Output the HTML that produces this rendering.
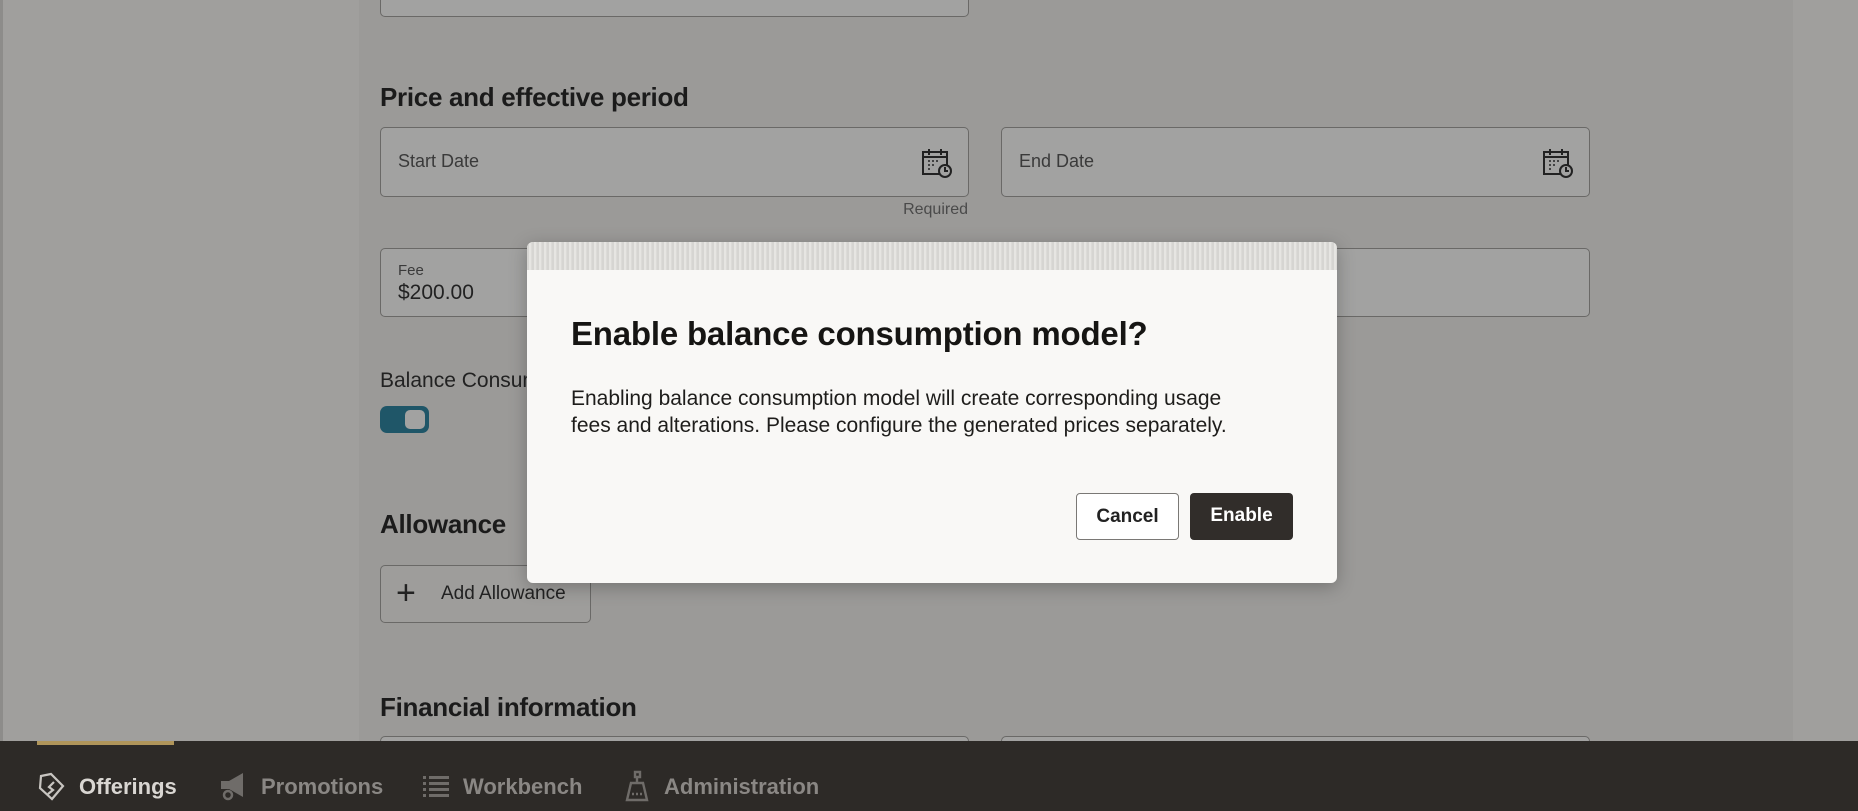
<!DOCTYPE html>
<html><head><meta charset="utf-8"><style>
*{box-sizing:border-box;margin:0;padding:0}
body{width:1858px;height:811px;overflow:hidden;background:#a09f9d;font-family:"Liberation Sans",sans-serif;position:relative;color:#1e1e1e}
.abs{position:absolute}
.col{left:359px;top:0;width:1434px;height:741px;background:#9b9a98}
.edge{left:0;top:0;width:3px;height:741px;background:#8d8c8a}
.field{position:absolute;border:1px solid #6a6967;border-radius:5px;background:#a2a2a1}
.lbl{position:absolute;font-size:18px;color:#3a3a3a}
h2{position:absolute;font-size:26px;font-weight:bold;color:#1b1b1b;letter-spacing:-0.3px}
.bar{left:0;top:741px;width:1858px;height:70px;background:#2d2a27}
.nav{position:absolute;top:774px;font-size:22px;font-weight:600;color:#8a8784}
.dlg{left:527px;top:242px;width:810px;height:341px;background:#f9f8f6;border-radius:6px;overflow:hidden;box-shadow:0 4px 18px rgba(0,0,0,.25)}
.tex{left:0;top:0;width:810px;height:28px;background:repeating-linear-gradient(90deg,#d6d5d2 0 2px,#e6e5e2 2px 4px,#dcdbd8 4px 5px)}
.btn{position:absolute;top:251px;height:47px;border-radius:4px;font-size:19px;font-weight:bold;text-align:center;line-height:45px}
</style></head><body>
<div class="abs edge"></div>
<div class="abs col"></div>
<div class="field" style="left:380px;top:-20px;width:589px;height:37px"></div>
<h2 style="left:380px;top:82px">Price and effective period</h2>
<div class="field" style="left:380px;top:127px;width:589px;height:70px"><span class="lbl" style="left:17px;top:23px">Start Date</span>
<svg class="abs" style="left:540px;top:19px" width="32" height="32" viewBox="0 0 32 32" fill="none" stroke="#222" stroke-width="2"><rect x="2" y="5" width="24" height="22"/><path d="M2 10h24M8 2v6M20 2v6"/><circle cx="24" cy="24" r="6" fill="#a2a2a1"/><path d="M24 20v4h3"/><path d="M7 14h2M11 14h2M15 14h2M7 18h2M11 18h2M7 22h2" stroke-width="1.5"/></svg></div>
<div class="field" style="left:1001px;top:127px;width:589px;height:70px"><span class="lbl" style="left:17px;top:23px">End Date</span>
<svg class="abs" style="left:540px;top:19px" width="32" height="32" viewBox="0 0 32 32" fill="none" stroke="#222" stroke-width="2"><rect x="2" y="5" width="24" height="22"/><path d="M2 10h24M8 2v6M20 2v6"/><circle cx="24" cy="24" r="6" fill="#a2a2a1"/><path d="M24 20v4h3"/><path d="M7 14h2M11 14h2M15 14h2M7 18h2M11 18h2M7 22h2" stroke-width="1.5"/></svg></div>
<div class="abs" style="left:880px;top:201px;width:88px;text-align:right;font-size:16px;color:#4a4a4a">Required</div>
<div class="field" style="left:380px;top:248px;width:589px;height:69px"><span class="abs" style="left:17px;top:13px;font-size:15px;color:#3a3a3a">Fee</span><span class="abs" style="left:17px;top:32px;font-size:21px;color:#222">$200.00</span></div>
<div class="field" style="left:1001px;top:248px;width:589px;height:69px"></div>
<div class="abs" style="left:380px;top:369px;font-size:21px;color:#222">Balance Consumption</div>
<div class="abs" style="left:380px;top:406px;width:49px;height:27px;border-radius:7px;background:#1f5668"><div class="abs" style="left:25px;top:4px;width:20px;height:19px;border-radius:5px;background:#a2a2a1"></div></div>
<h2 style="left:380px;top:509px">Allowance</h2>
<div class="field" style="left:380px;top:565px;width:211px;height:58px;background:#9e9d9b"><span class="abs" style="left:15px;top:10px;font-size:34px;font-weight:300;color:#222;line-height:34px">+</span><span class="abs" style="left:60px;top:17px;font-size:19px;color:#222">Add Allowance</span></div>
<h2 style="left:380px;top:692px">Financial information</h2>
<div class="field" style="left:380px;top:736px;width:589px;height:30px"></div>
<div class="field" style="left:1001px;top:736px;width:589px;height:30px"></div>
<div class="abs bar"></div>
<div class="abs" style="left:37px;top:741px;width:137px;height:4px;background:#b0955a"></div>
<svg class="abs" style="left:38px;top:772px" width="28" height="30" viewBox="0 0 28 30" fill="none" stroke="#c8c5c1" stroke-width="2.2"><path d="M3 4l10-2 12 12-11 13L2 16z"/><path d="M16 10l-5 5 4 3-5 4"/></svg>
<div class="nav" style="left:79px;color:#d9d6d2">Offerings</div>
<svg class="abs" style="left:219px;top:771px" width="30" height="30" viewBox="0 0 30 30" fill="#6f6c69"><path d="M2 10h8l14-8v24L10 18H2z"/><circle cx="9" cy="24" r="4" fill="none" stroke="#6f6c69" stroke-width="2.5"/></svg>
<div class="nav" style="left:261px">Promotions</div>
<svg class="abs" style="left:423px;top:775px" width="26" height="22" viewBox="0 0 26 22" fill="#6f6c69"><rect x="0" y="1" width="3" height="3"/><rect x="6" y="1" width="20" height="3"/><rect x="0" y="7" width="3" height="3"/><rect x="6" y="7" width="20" height="3"/><rect x="0" y="13" width="3" height="3"/><rect x="6" y="13" width="20" height="3"/><rect x="0" y="19" width="3" height="3"/><rect x="6" y="19" width="20" height="3"/></svg>
<div class="nav" style="left:463px">Workbench</div>
<svg class="abs" style="left:624px;top:770px" width="26" height="32" viewBox="0 0 26 32" fill="none" stroke="#6f6c69" stroke-width="2.4"><path d="M11 2h5v5h-5zM13 7v6"/><path d="M7 13h12l4 17H3z"/><path d="M8 24h2M12 24h2M16 24h2"/></svg>
<div class="nav" style="left:664px">Administration</div>
<div class="abs dlg">
<div class="abs tex"></div>
<div class="abs" style="left:44px;top:73px;font-size:33px;font-weight:bold;color:#161513;letter-spacing:-0.2px">Enable balance consumption model?</div>
<div class="abs" style="left:44px;top:143px;width:690px;font-size:21px;line-height:27px;color:#1e1d1b">Enabling balance consumption model will create corresponding usage fees and alterations. Please configure the generated prices separately.</div>
<div class="btn" style="left:549px;width:103px;border:1px solid #7a7875;background:#fff;color:#222">Cancel</div>
<div class="btn" style="left:663px;width:103px;background:#312d2a;color:#fff">Enable</div>
</div>
</body></html>
